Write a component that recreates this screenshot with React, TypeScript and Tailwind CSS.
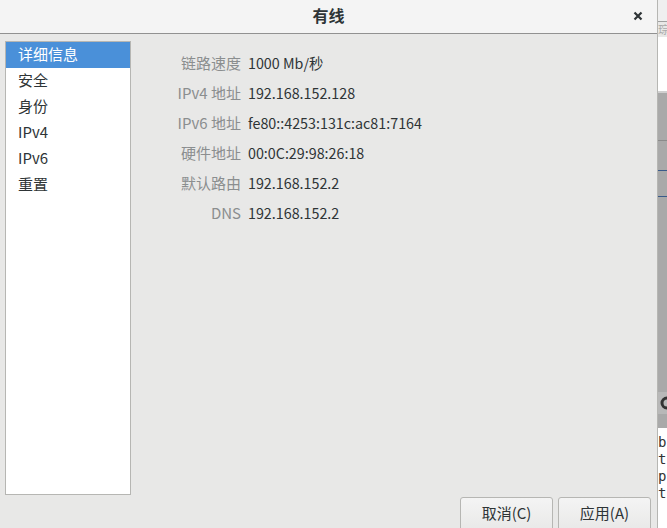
const rows: [string, string][] = [
  ['链路速度', '1000 Mb/秒'],
  ['IPv4 地址', '192.168.152.128'],
  ['IPv6 地址', 'fe80::4253:131c:ac81:7164'],
  ['硬件地址', '00:0C:29:98:26:18'],
  ['默认路由', '192.168.152.2'],
  ['DNS', '192.168.152.2'],
]

const tabs = ['详细信息', '安全', '身份', 'IPv4', 'IPv6', '重置']

function Sidebar() {
  return (
    <div className="w-[126px] h-[454px] bg-white border border-[#b6b6b3] shrink-0">
      {tabs.map((t, i) => (
        <div
          key={t}
          className={`h-[26px] flex items-center pl-[12px] pb-[2px] text-[15px] ${
            i === 0 ? 'bg-[#4a90d9] text-white' : 'text-[#2e3436]'
          }`}
        >
          {t}
        </div>
      ))}
    </div>
  )
}

function Details() {
  return (
    <div className="grid grid-cols-[110px_1fr] gap-x-[7px] auto-rows-[30px] pt-[7px] text-[15px]">
      {rows.map(([label, value]) => (
        <div key={label} className="contents">
          <div className="flex items-center justify-end text-[#8b8e8f]">{label}</div>
          <div className="flex items-center text-[#2e3436] text-[14.3px]">{value}</div>
        </div>
      ))}
    </div>
  )
}

function Button({ children }: { children: string }) {
  return (
    <div className="w-[93px] h-[36px] rounded-t-[3px] border border-[#b6b6b3] bg-gradient-to-b from-[#f4f4f4] to-[#e8e8e7] flex items-start pt-[4px] justify-center text-[15px] text-[#2e3436]">
      {children}
    </div>
  )
}

function BackgroundStrip() {
  return (
    <div className="w-[9px] flex flex-col shrink-0 text-[12px] leading-[15px] text-[#333] overflow-hidden">
      <div className="h-[21px] bg-[#efefef]" />
      <div className="h-[1px] bg-[#a0a0a0]" />
      <div className="h-[15px] bg-[#e8e8e7] text-[#aaa] text-[11px] leading-[15px] whitespace-nowrap">琮</div>
      <div className="h-[54px] bg-white" />
      <div className="h-[2px] bg-[#d0d0d0]" />
      <div className="h-[47px] bg-[#a9a9a9]" />
      <div className="h-[1px] bg-[#8a8a8a]" />
      <div className="h-[29px] bg-[#a9a9a9]" />
      <div className="h-[1px] bg-[#3a5a8a]" />
      <div className="h-[25px] bg-[#a9a9a9]" />
      <div className="h-[1px] bg-[#3a5a8a]" />
      <div className="h-[195px] bg-[#a9a9a9]" />
      <div className="h-[22px] bg-[#b8b8b8] flex items-center">
        <svg width="9" height="16" viewBox="0 0 9 16">
          <circle cx="9" cy="8" r="5" fill="none" stroke="#333" strokeWidth="3" />
        </svg>
      </div>
      <div className="h-[14px] bg-[#a9a9a9]" />
      <div
        className="flex-1 bg-white pt-[6px] text-[14px] leading-[17px] whitespace-nowrap"
        style={{ fontFamily: '"DejaVu Sans Mono", monospace' }}
      >
        <div>b:</div>
        <div>t(</div>
        <div>p|</div>
        <div>t</div>
      </div>
    </div>
  )
}

export default function App() {
  return (
    <div
      className="w-[667px] h-[528px] flex overflow-hidden bg-[#e8e8e7]"
      style={{ fontFamily: '"Noto Sans CJK SC", "DejaVu Sans", sans-serif' }}
    >
      <div className="w-[658px] shrink-0 flex flex-col border-r border-[#b6b6b3]">
        <div className="h-[34px] shrink-0 bg-[#f4f4f4] border-b border-[#919191] relative flex items-center justify-center pb-[3px]">
          <span className="text-[16px] font-bold text-[#2e3436]">有线</span>
          <svg className="absolute right-[14px] top-[11px]" width="10" height="10" viewBox="0 0 10 10">
            <path d="M1.5 1.5 L8.5 8.5 M8.5 1.5 L1.5 8.5" stroke="#2e3436" strokeWidth="2.2" />
          </svg>
        </div>
        <div className="flex-1 flex flex-col pl-[5px] pt-[7px]">
          <div className="flex">
            <Sidebar />
            <Details />
          </div>
          <div className="flex justify-end gap-[5px] pr-[6px] pt-[2px]">
            <Button>取消(C)</Button>
            <Button>应用(A)</Button>
          </div>
        </div>
      </div>
      <BackgroundStrip />
    </div>
  )
}
